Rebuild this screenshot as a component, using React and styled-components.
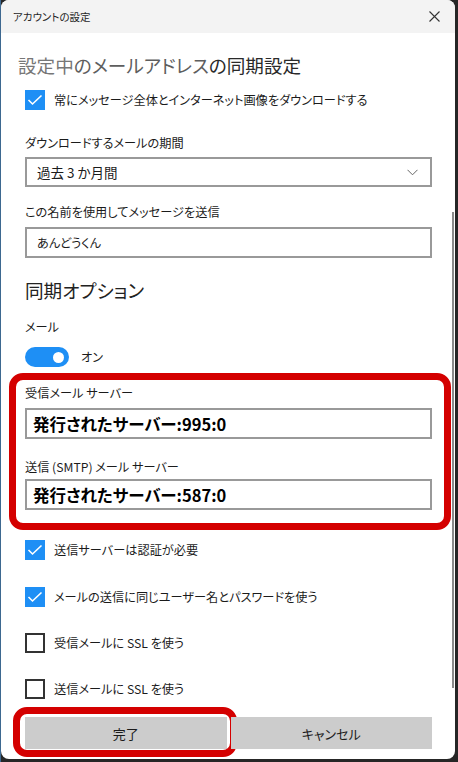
import React from "react";
import styled, { createGlobalStyle } from "styled-components";

const Global = createGlobalStyle`
  html, body { margin: 0; padding: 0; }
  body {
    background: linear-gradient(to right, #3d6890 0 1px, #262626 1px);
    width: 458px; height: 762px; overflow: hidden;
    font-family: "Noto Sans CJK JP", "Noto Sans", sans-serif;
    font-feature-settings: "palt";
    color: #1b1b1b;
  }
`;

const Window = styled.div`
  margin-left: 1px;
  width: 454px;
  height: 759px;
  background: #fff;
  border-radius: 8px;
  overflow: hidden;
  display: flex;
  flex-direction: column;
`;

const TitleBar = styled.div`
  height: 33px;
  flex: none;
  background: #f3f3f3;
  display: flex;
  align-items: center;
  justify-content: space-between;
  padding: 0 15px 0 12px;
  font-size: 10.5px;
  color: #1f1f1f;
`;

const Body = styled.div`
  flex: 1;
  display: flex;
  min-height: 0;
`;

const Content = styled.div`
  flex: 1;
  display: flex;
  flex-direction: column;
  padding: 0 19px 10px 24px;
`;

const Track = styled.div`
  width: 4px;
  flex: none;
  display: flex;
  flex-direction: column;
`;

const Thumb = styled.div`
  margin-top: 179px;
  margin-left: 1px;
  width: 2px;
  height: 476px;
  background: #8a8a8a;
`;

const Heading = styled.div`
  margin-top: ${(p) => p.$mt}px;
  margin-left: ${(p) => p.$ml || 0}px;
  font-size: 18.6px;
  line-height: 28px;
  color: #222;
  white-space: nowrap;
`;

const Tone = styled.span`
  color: ${(p) => p.$c};
`;

const Label = styled.div`
  margin-top: ${(p) => p.$mt}px;
  font-size: 12.2px;
  line-height: 20px;
  height: 20px;
  white-space: nowrap;
`;

const Row = styled.div`
  margin-top: ${(p) => p.$mt}px;
  height: 20px;
  display: flex;
  align-items: center;
  gap: ${(p) => p.$gap || 9}px;
  font-size: 12.2px;
  white-space: nowrap;
`;

const Box = styled.div`
  width: 20px;
  height: 20px;
  box-sizing: border-box;
  flex: none;
  display: flex;
  align-items: center;
  justify-content: center;
  background: ${(p) => (p.$on ? "#1e8ff5" : "#fff")};
  border: ${(p) => (p.$on ? "none" : "2px solid #333")};
`;

const Field = styled.div`
  margin-top: ${(p) => p.$mt}px;
  height: ${(p) => p.$h}px;
  box-sizing: border-box;
  border: 2px solid #999;
  display: flex;
  align-items: center;
  justify-content: space-between;
  padding: 0 12px 0 ${(p) => p.$pl}px;
  font-size: ${(p) => p.$fs}px;
  font-weight: ${(p) => (p.$bold ? 700 : 400)};
  color: ${(p) => (p.$bold ? "#000" : "#1b1b1b")};
  white-space: nowrap;
`;

const Toggle = styled.div`
  width: 44px;
  height: 20px;
  border-radius: 10px;
  background: #1e8ff5;
  display: flex;
  align-items: center;
  justify-content: flex-end;
  padding-right: 5px;
  box-sizing: border-box;
  flex: none;
`;

const Knob = styled.div`
  width: 11px;
  height: 11px;
  border-radius: 50%;
  background: #fff;
`;

const Highlight = styled.div`
  margin: 6px -19px 0 -16px;
  border: 7px solid #d40000;
  border-radius: 14px;
  padding: 3px 12px 13px 9px;
  display: flex;
  flex-direction: column;
`;

const Buttons = styled.div`
  margin-top: 18px;
  display: grid;
  grid-template-columns: 1fr 1fr;
  gap: 4px;
`;

const Button = styled.div`
  position: relative;
  height: 32px;
  background: #cccccc;
  display: flex;
  align-items: center;
  justify-content: center;
  font-size: 13px;
  color: #1b1b1b;
  ${(p) =>
    p.$marked &&
    `
    &::after {
      content: "";
      position: absolute;
      left: -12px; top: -10px; right: -10px; bottom: -8px;
      border: 7px solid #d40000;
      border-radius: 14px;
    }
  `}
`;

const Check = () => (
  <svg width="16" height="12" viewBox="0 0 16 12">
    <polyline points="1.5,6 5.5,10 14.5,1.5" fill="none" stroke="#fff" strokeWidth="1.6" />
  </svg>
);

const CheckRow = ({ mt, on, children }) => (
  <Row $mt={mt}>
    <Box $on={on}>{on && <Check />}</Box>
    <span>{children}</span>
  </Row>
);

export default function App() {
  return (
    <>
      <Global />
      <Window>
        <TitleBar>
          <span>アカウントの設定</span>
          <svg width="11" height="11" viewBox="0 0 11 11">
            <path d="M0.5 0.5 L10.5 10.5 M10.5 0.5 L0.5 10.5" stroke="#333" strokeWidth="1.1" />
          </svg>
        </TitleBar>
        <Body>
          <Content>
            <Heading $mt={18} $ml={-7}>
              <Tone $c="#777">設定中</Tone>
              <Tone $c="#5e5e5e">のメールアドレス</Tone>
              <Tone $c="#2a2a2a">の同期設定</Tone>
            </Heading>
            <CheckRow mt={11} on>常にメッセージ全体とインターネット画像をダウンロードする</CheckRow>
            <Label $mt={23}>ダウンロードするメールの期間</Label>
            <Field $mt={4} $h={30} $pl={10} $fs={13.5}>
              <span>過去 3 か月間</span>
              <svg width="11" height="7" viewBox="0 0 11 7">
                <polyline points="0.5,0.8 5.5,5.8 10.5,0.8" fill="none" stroke="#666" strokeWidth="1" />
              </svg>
            </Field>
            <Label $mt={15}>この名前を使用してメッセージを送信</Label>
            <Field $mt={5} $h={31} $pl={10} $fs={12.2}>あんどうくん</Field>
            <Heading $mt={18}>同期オプション</Heading>
            <Label $mt={13}>メール</Label>
            <Row $mt={10} $gap={12}>
              <Toggle>
                <Knob />
              </Toggle>
              <span>オン</span>
            </Row>
            <Highlight>
              <Label $mt={0}>受信メール サーバー</Label>
              <Field $mt={5} $h={31} $pl={6} $fs={16.5} $bold>発行されたサーバー:995:0</Field>
              <Label $mt={18}>送信 (SMTP) メール サーバー</Label>
              <Field $mt={2} $h={31} $pl={6} $fs={16.5} $bold>発行されたサーバー:587:0</Field>
            </Highlight>
            <CheckRow mt={10} on>送信サーバーは認証が必要</CheckRow>
            <CheckRow mt={27} on>メールの送信に同じユーザー名とパスワードを使う</CheckRow>
            <CheckRow mt={26}>受信メールに SSL を使う</CheckRow>
            <CheckRow mt={26}>送信メールに SSL を使う</CheckRow>
            <Buttons>
              <Button $marked>完了</Button>
              <Button>キャンセル</Button>
            </Buttons>
          </Content>
          <Track>
            <Thumb />
          </Track>
        </Body>
      </Window>
    </>
  );
}
